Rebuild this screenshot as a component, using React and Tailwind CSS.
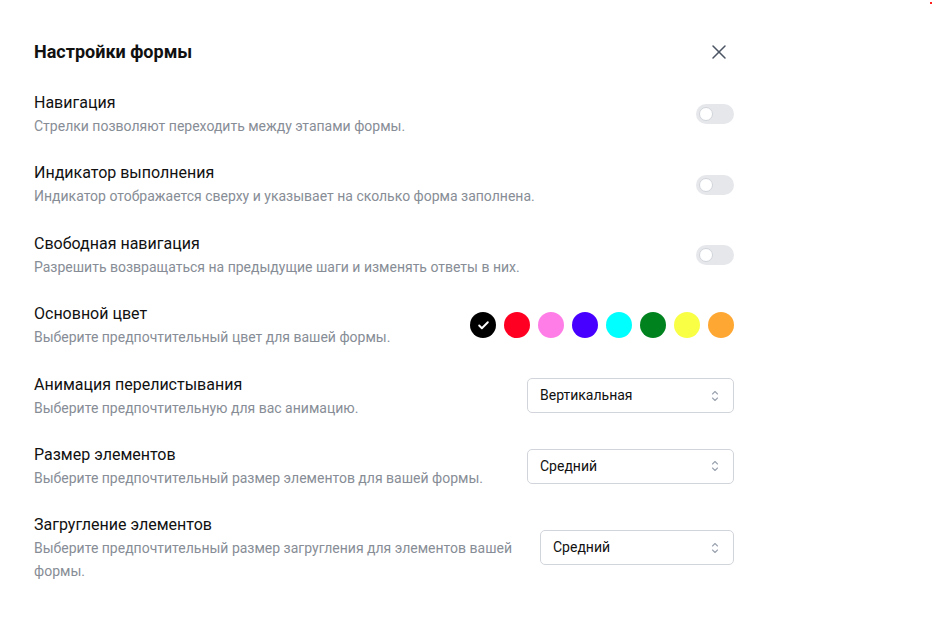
import { X, Check } from "lucide-react";

const toggles = [
  { title: "Навигация", desc: "Стрелки позволяют переходить между этапами формы." },
  { title: "Индикатор выполнения", desc: "Индикатор отображается сверху и указывает на сколько форма заполнена." },
  { title: "Свободная навигация", desc: "Разрешить возвращаться на предыдущие шаги и изменять ответы в них." },
];

const colors = ["#000000", "#ff0022", "#ff7de6", "#4700ff", "#00ffff", "#00821f", "#f8ff45", "#ffa733"];

function Toggle() {
  return (
    <div className="flex h-[20px] w-[38px] shrink-0 items-center rounded-full bg-[#e5e7eb] px-[3px]">
      <div className="h-[14px] w-[14px] rounded-full border border-[#d1d5db] bg-white" />
    </div>
  );
}

function Chevrons() {
  return (
    <svg width="8" height="12" viewBox="0 0 8 12" fill="none" stroke="#9ca3af" strokeWidth="1.1" strokeLinecap="round" strokeLinejoin="round">
      <path d="M1.5 4L4 1.5L6.5 4" />
      <path d="M1.5 8L4 10.5L6.5 8" />
    </svg>
  );
}

function Select({ value, width }) {
  return (
    <div className={`flex h-[35px] shrink-0 items-center justify-between rounded-[5px] border border-[#d1d5db] bg-white pl-[12px] pr-[14px] text-[14px] text-[#111] ${width}`}>
      <span>{value}</span>
      <Chevrons />
    </div>
  );
}

function Text({ title, desc }) {
  return (
    <div className="min-w-0 flex-1">
      <div className="text-[16px] leading-[24px] text-[#111]">{title}</div>
      <div className="text-[14px] leading-[22.4px] text-[#878d96]">{desc}</div>
    </div>
  );
}

export default function App() {
  return (
    <div className="relative min-h-[617px] w-[933px] bg-white font-['Roboto',sans-serif]">
      <div className="absolute right-[1px] top-[2px] h-[2px] w-[2px] bg-[#ff2020]" />
      <div className="w-[734px] pl-[34px] pt-[38px]">
        <div className="flex items-center">
          <h2 className="text-[18px] font-bold leading-[28px] text-[#111]">Настройки формы</h2>
          <button className="ml-auto mr-[3px] text-[#4b5563]">
            <X size={24} strokeWidth={1.5} />
          </button>
        </div>

        <div className="mt-[25px] flex flex-col gap-[24px]">
          {toggles.map((t) => (
            <div key={t.title} className="flex items-center gap-6">
              <Text title={t.title} desc={t.desc} />
              <Toggle />
            </div>
          ))}

          <div className="flex items-center gap-6">
            <Text title="Основной цвет" desc="Выберите предпочтительный цвет для вашей формы." />
            <div className="flex gap-[8px]">
              {colors.map((c, i) => (
                <div key={c} className="flex h-[26px] w-[26px] items-center justify-center rounded-full" style={{ backgroundColor: c }}>
                  {i === 0 && <Check size={13} strokeWidth={3.5} color="white" />}
                </div>
              ))}
            </div>
          </div>

          <div className="flex items-center gap-6">
            <Text title="Анимация перелистывания" desc="Выберите предпочтительную для вас анимацию." />
            <Select value="Вертикальная" width="w-[207px]" />
          </div>

          <div className="flex items-center gap-6">
            <Text title="Размер элементов" desc="Выберите предпочтительный размер элементов для вашей формы." />
            <Select value="Средний" width="w-[207px]" />
          </div>

          <div className="flex items-center gap-7">
            <Text title="Загругление элементов" desc="Выберите предпочтительный размер загругления для элементов вашей формы." />
            <Select value="Средний" width="w-[194px]" />
          </div>
        </div>
      </div>
    </div>
  );
}
